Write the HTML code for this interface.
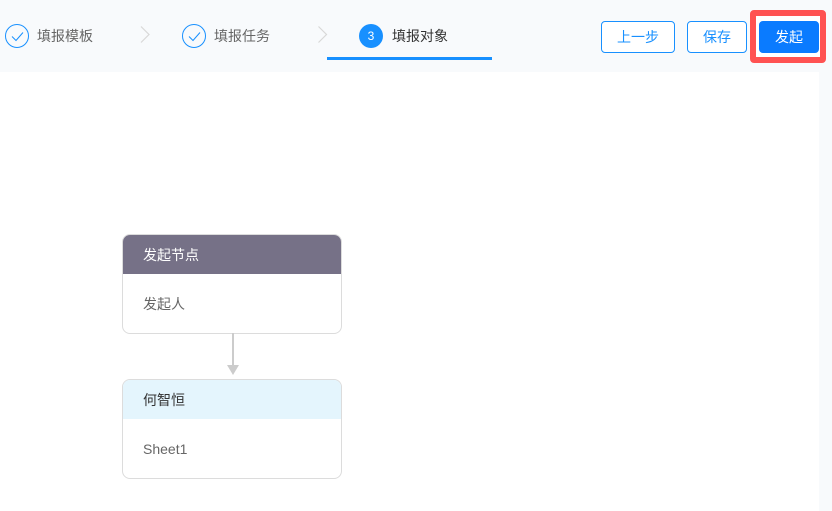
<!DOCTYPE html>
<html><head><meta charset="utf-8"><style>
html,body{margin:0;padding:0;width:832px;height:511px;overflow:hidden;background:#fff;font-family:"Liberation Sans","Noto Sans CJK SC",sans-serif}
.a{position:absolute;box-sizing:border-box}
.t{position:absolute;font-size:14px;line-height:20px;white-space:nowrap}
.btn{position:absolute;box-sizing:border-box;top:21px;height:32px;border:1px solid #1890ff;border-radius:4px;background:#fff;color:#1890ff;font-size:14px;line-height:30px;text-align:center}
.card{position:absolute;box-sizing:border-box;left:122px;width:220px;height:100px;border:1px solid #dcdcdc;border-radius:8px;background:#fff;overflow:hidden}
.hd{height:40px;line-height:42px;padding-left:21px;font-size:14px;margin:-1px -1px 0 -1px}
.bd{padding-left:20px;font-size:14px;line-height:20px;color:#666;margin-top:20px}
</style></head><body>
<div class="a" style="left:0;top:0;width:832px;height:72px;background:#f8fafc"></div>
<div class="a" style="left:819px;top:72px;width:13px;height:439px;background:#f8fafc"></div>

<svg class="a" style="left:0;top:0" width="500" height="72" fill="none">
<circle cx="17" cy="36" r="11.5" stroke="#1890ff" stroke-width="1"/>
<path d="M12 36.5l4 4 7-8" stroke="#1890ff" stroke-width="1"/>
<circle cx="194" cy="36" r="11.5" stroke="#1890ff" stroke-width="1"/>
<path d="M189 36.5l4 4 7-8" stroke="#1890ff" stroke-width="1"/>
<path d="M141 26.5l8 8-8 8" stroke="#d8d8d8" stroke-width="1.2"/>
<path d="M318.5 26.5l8 8-8 8" stroke="#d8d8d8" stroke-width="1.2"/>
<circle cx="371" cy="36" r="12" fill="#1890ff"/>
</svg>
<div class="t" style="left:37px;top:26px;color:#666">填报模板</div>
<div class="t" style="left:214px;top:26px;color:#666">填报任务</div>
<div class="t" style="left:359px;top:26px;width:24px;text-align:center;color:#fff;font-size:12px">3</div>
<div class="t" style="left:392px;top:26px;color:#333">填报对象</div>
<div class="a" style="left:327px;top:57px;width:165px;height:3px;background:#1890ff"></div>

<div class="btn" style="left:601px;width:74px">上一步</div>
<div class="btn" style="left:687px;width:60px">保存</div>
<div class="a" style="left:750px;top:10px;width:76px;height:53px;background:#fff;border:6px solid #ff5252;border-radius:4px"></div>
<div class="btn" style="left:759px;width:60px;background:#0a7bff;border-color:#0a7bff;color:#fff">发起</div>

<div class="card" style="top:234px">
<div class="hd" style="background:#767187;color:#fff">发起节点</div>
<div class="bd">发起人</div>
</div>
<svg class="a" style="left:222px;top:333px" width="22" height="46" fill="none">
<rect x="10" y="0" width="2" height="33" fill="#ccc"/>
<path d="M5 32h12l-6 10z" fill="#ccc"/>
</svg>
<div class="card" style="top:379px">
<div class="hd" style="background:#e4f5fd;color:#333">何智恒</div>
<div class="bd">Sheet1</div>
</div>
</body></html>
